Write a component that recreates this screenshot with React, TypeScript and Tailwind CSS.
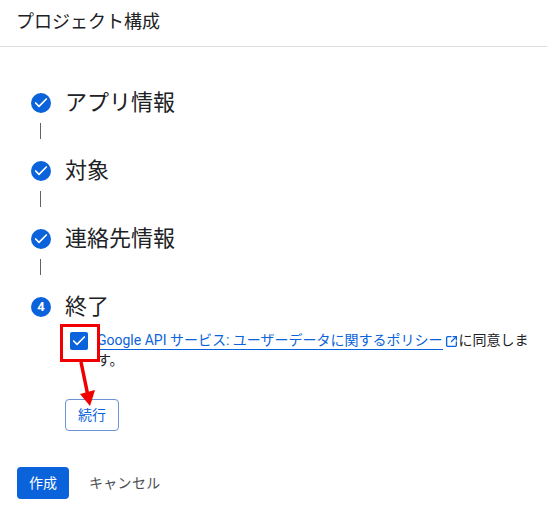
import { Check, SquareArrowOutUpRight } from "lucide-react"

function DoneStep({ label }: { label: string }) {
  return (
    <div>
      <div className="flex h-[34px] items-center gap-[14px]">
        <div className="flex h-5 w-5 items-center justify-center rounded-full bg-[#0b63db]">
          <Check className="h-4 w-4 text-white" strokeWidth={2.5} />
        </div>
        <h2 className="text-[22px] leading-[34px] text-[#202124]">{label}</h2>
      </div>
      <div className="ml-[9px] mt-[3px] mb-[15px] h-4 w-px bg-[#5f6368]" />
    </div>
  )
}

export default function App() {
  return (
    <div className="relative h-[505px] w-[547px] overflow-hidden bg-white font-['Roboto','Noto_Sans_CJK_JP',sans-serif]">
      <header className="flex h-[47px] items-center border-b border-[#dadce0] px-[16px] pb-[3px]">
        <h1 className="text-[18px] text-[#202124]">プロジェクト構成</h1>
      </header>

      <div className="pl-[31px] pt-[39px]">
        <DoneStep label="アプリ情報" />
        <DoneStep label="対象" />
        <DoneStep label="連絡先情報" />

        <div className="flex h-[34px] items-center gap-[14px]">
          <div className="flex h-5 w-5 items-center justify-center rounded-full bg-[#0b63db] text-[13px] font-bold text-white">
            4
          </div>
          <h2 className="text-[22px] leading-[34px] text-[#202124]">終了</h2>
        </div>

        <div className="ml-[39px] mt-[8px] flex w-[462px]">
          <div className="flex h-[18px] w-[18px] shrink-0 items-center justify-center rounded-[2px] bg-[#0b63db]">
            <Check className="h-4 w-4 text-white" strokeWidth={2.5} />
          </div>
          <p className="-mt-[2px] ml-[9px] text-[14px] leading-[20px] text-[#202124]">
            <a href="#" className="border-b border-[#0b63db] pb-px text-[#0b63db]">
              Google API サービス: ユーザーデータに関するポリシー
            </a>
            <SquareArrowOutUpRight className="ml-[2px] mr-px inline h-[13px] w-[13px] text-[#0b63db]" strokeWidth={2.5} />
            に同意します。
          </p>
        </div>

        <button className="ml-[34px] mt-[29px] flex h-8 w-[54px] items-center justify-center rounded-[4px] border border-[#6b93d6] text-[14px] text-[#0b63db]">
          続行
        </button>
      </div>

      <div className="mt-[36px] flex items-center gap-[20px] pl-[17px]">
        <button className="flex h-8 w-[52px] items-center justify-center rounded-[4px] bg-[#0b63db] text-[14px] text-white">
          作成
        </button>
        <button className="text-[14px] tracking-[0.3px] text-[#4a4f54]">キャンセル</button>
      </div>

      {/* red annotation */}
      <div className="absolute left-[60px] top-[324px] h-[38px] w-[40px] border-[3px] border-[#f00000]" />
      <svg className="absolute left-[70px] top-[360px]" width="30" height="50" viewBox="0 0 30 50">
        <path d="M11 2 L18 36" stroke="#f00000" strokeWidth="3.5" fill="none" />
        <path d="M10 34 L25 30 L20 46 Z" fill="#f00000" />
      </svg>
    </div>
  )
}
